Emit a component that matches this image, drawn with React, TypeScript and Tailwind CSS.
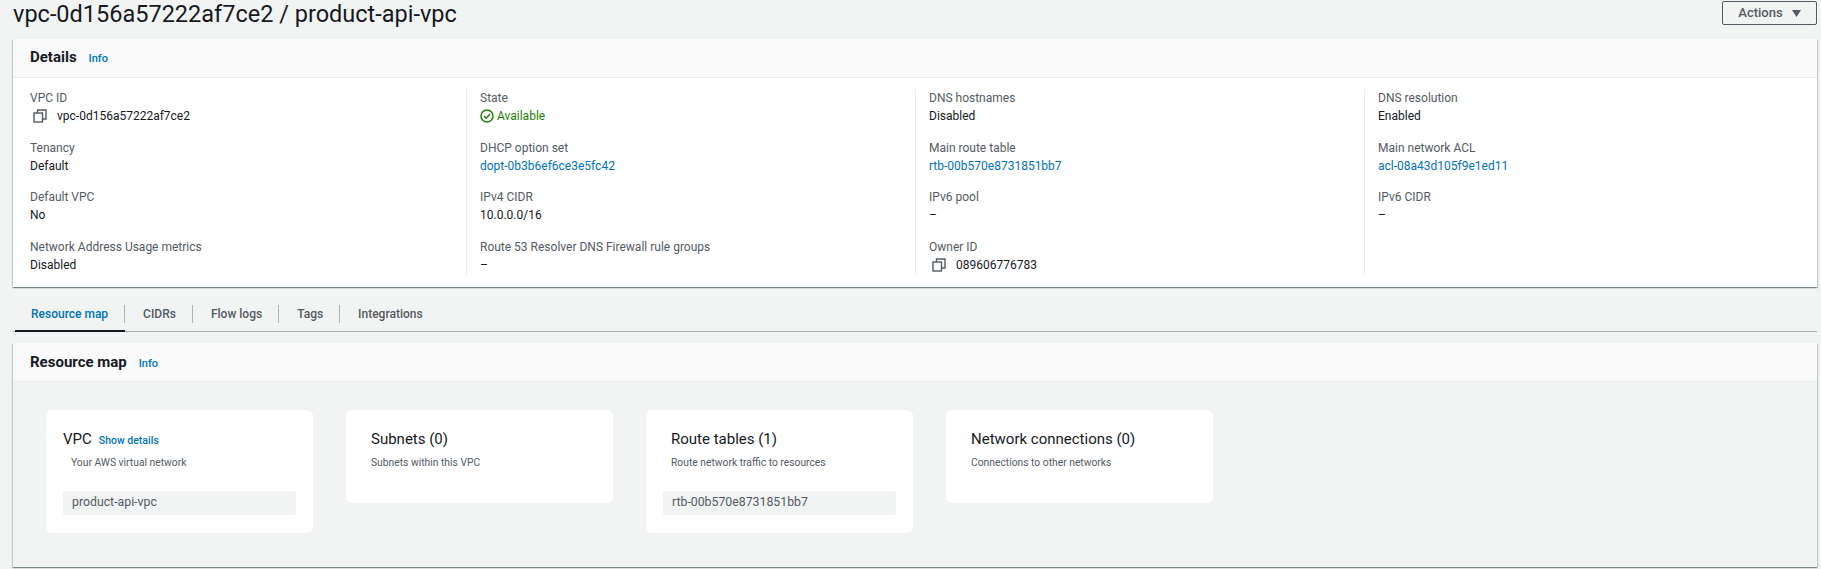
import React from 'react'

interface Field {
  label: string
  value: string
  copy?: boolean
  link?: boolean
  status?: boolean
}

const COLUMNS: Field[][] = [
  [
    { label: 'VPC ID', value: 'vpc-0d156a57222af7ce2', copy: true },
    { label: 'Tenancy', value: 'Default' },
    { label: 'Default VPC', value: 'No' },
    { label: 'Network Address Usage metrics', value: 'Disabled' },
  ],
  [
    { label: 'State', value: 'Available', status: true },
    { label: 'DHCP option set', value: 'dopt-0b3b6ef6ce3e5fc42', link: true },
    { label: 'IPv4 CIDR', value: '10.0.0.0/16' },
    { label: 'Route 53 Resolver DNS Firewall rule groups', value: '–' },
  ],
  [
    { label: 'DNS hostnames', value: 'Disabled' },
    { label: 'Main route table', value: 'rtb-00b570e8731851bb7', link: true },
    { label: 'IPv6 pool', value: '–' },
    { label: 'Owner ID', value: '089606776783', copy: true },
  ],
  [
    { label: 'DNS resolution', value: 'Enabled' },
    { label: 'Main network ACL', value: 'acl-08a43d105f9e1ed11', link: true },
    { label: 'IPv6 CIDR', value: '–' },
  ],
]

const TABS = ['Resource map', 'CIDRs', 'Flow logs', 'Tags', 'Integrations']

function CopyIcon() {
  return (
    <svg width="14" height="14" viewBox="0 0 14 14" fill="none" stroke="#545b64" strokeWidth="1.4" className="shrink-0">
      <rect x="1" y="4" width="8.5" height="9" fill="#fff" />
      <path d="M4.5 4V1h8.5v9H9.5" />
    </svg>
  )
}

function StatusIcon() {
  return (
    <svg width="14" height="14" viewBox="0 0 14 14" fill="none" stroke="#1d8102" strokeWidth="1.5" className="shrink-0">
      <circle cx="7" cy="7" r="6" />
      <path d="M4 7l2.2 2.2L10 5" />
    </svg>
  )
}

function FieldRow({ field }: { field: Field }) {
  return (
    <div className="h-[49.7px]">
      <div className="text-[#545b64] text-[12px] leading-[18px]">{field.label}</div>
      <div className="flex items-center h-[18px] text-[12px]">
        {field.copy && (
          <span className="ml-[3px] mr-[10px] flex">
            <CopyIcon />
          </span>
        )}
        {field.status && (
          <span className="mr-[3px] flex">
            <StatusIcon />
          </span>
        )}
        <span className={field.link ? 'text-[#0073bb]' : field.status ? 'text-[#1d8102]' : 'text-[#16191f]'}>
          {field.value}
        </span>
      </div>
    </div>
  )
}

function MapCard({ title, desc, item, vpc }: { title: string; desc: string; item?: string; vpc?: boolean }) {
  return (
    <div className={`w-[267px] bg-white rounded-[6px] px-[17px] pt-[17px] ${item ? 'h-[123px]' : 'h-[93px]'}`}>
      <div className={`flex items-baseline h-[24px] ${vpc ? '' : 'pl-[8px]'}`}>
        <span className="text-[#16191f] text-[15px] leading-[24px]">{title}</span>
        {vpc && <span className="ml-[7px] text-[#0073bb] text-[10.5px] font-medium">Show details</span>}
      </div>
      <div className="mt-[4px] pl-[8px] text-[#545b64] text-[10.3px] leading-[16px]">{desc}</div>
      {item && (
        <div className="mt-[20px] h-[24px] bg-[#f2f3f3] rounded-[2px] px-[9px] text-[#545b64] text-[12.3px] leading-[23px]">
          {item}
        </div>
      )}
    </div>
  )
}

export default function App() {
  return (
    <div className="w-[1821px] h-[569px] overflow-hidden bg-[#f2f3f3] font-['Roboto','Noto_Sans',sans-serif]">
      {/* Page header */}
      <div className="flex justify-between pl-[13px] pr-[4px] pt-[1px] h-[39px]">
        <h1 className="text-[#16191f] text-[23.5px] leading-[26px] font-normal">vpc-0d156a57222af7ce2 / product-api-vpc</h1>
        <button className="w-[95px] h-[24px] border border-[#545b64] rounded-[2px] flex items-center justify-center gap-[9px] text-[#545b64] text-[13px] font-medium">
          Actions
          <svg width="9" height="7" viewBox="0 0 9 7">
            <path d="M0 0h9L4.5 7z" fill="#545b64" />
          </svg>
        </button>
      </div>

      {/* Details */}
      <div className="ml-[13px] mr-[4px] h-[248px] bg-white shadow-[0_1px_1px_rgba(0,28,36,0.3),1px_1px_1px_rgba(0,28,36,0.15),-1px_1px_1px_rgba(0,28,36,0.15)]">
        <div className="h-[39px] bg-[#fafafa] border-b border-[#eaeded] flex items-baseline pl-[17px] pt-[7px]">
          <span className="text-[#16191f] text-[15px] font-bold">Details</span>
          <span className="ml-[12px] text-[#0073bb] text-[11px] font-medium">Info</span>
        </div>
        <div className="grid grid-cols-4 pl-[4px] pr-[4px] pt-[11px]">
          {COLUMNS.map((fields, i) => (
            <div key={i} className={`h-[186px] pl-[13px] ${i > 0 ? 'border-l border-[#eaeded]' : ''}`}>
              {fields.map((field) => (
                <FieldRow key={field.label} field={field} />
              ))}
            </div>
          ))}
        </div>
      </div>

      {/* Tabs */}
      <div className="ml-[13px] mr-[4px] mt-[14px] h-[31px] border-b border-[#aab7b8] flex items-end pl-[2px] text-[12px] font-medium">
        {TABS.map((tab, i) => (
          <div
            key={tab}
            className={`h-[26px] pb-[2px] flex items-start ${i === 0 ? 'text-[#0073bb] shadow-[0_1px_0_#16191f,inset_0_-1px_0_#16191f]' : 'text-[#545b64]'}`}
          >
            <span className={`h-[18px] leading-[18px] ${i === 0 ? 'pl-[16px]' : 'pl-[18px]'} pr-[16px] ${i < TABS.length - 1 ? 'border-r border-[#aab7b8]' : ''}`}>
              {tab}
            </span>
          </div>
        ))}
      </div>

      {/* Resource map */}
      <div className="ml-[13px] mr-[4px] mt-[11px] h-[224px] shadow-[0_1px_1px_rgba(0,28,36,0.3),1px_1px_1px_rgba(0,28,36,0.15),-1px_1px_1px_rgba(0,28,36,0.15)]">
        <div className="h-[39px] bg-[#fafafa] border-b border-[#eaeded] flex items-baseline pl-[17px] pt-[8px]">
          <span className="text-[#16191f] text-[15px] font-bold">Resource map</span>
          <span className="ml-[12px] text-[#0073bb] text-[11px] font-medium">Info</span>
        </div>
        <div className="flex items-start gap-[33px] pl-[33px] pt-[28px]">
          <MapCard title="VPC" vpc desc="Your AWS virtual network" item="product-api-vpc" />
          <MapCard title="Subnets (0)" desc="Subnets within this VPC" />
          <MapCard title="Route tables (1)" desc="Route network traffic to resources" item="rtb-00b570e8731851bb7" />
          <MapCard title="Network connections (0)" desc="Connections to other networks" />
        </div>
      </div>
    </div>
  )
}
